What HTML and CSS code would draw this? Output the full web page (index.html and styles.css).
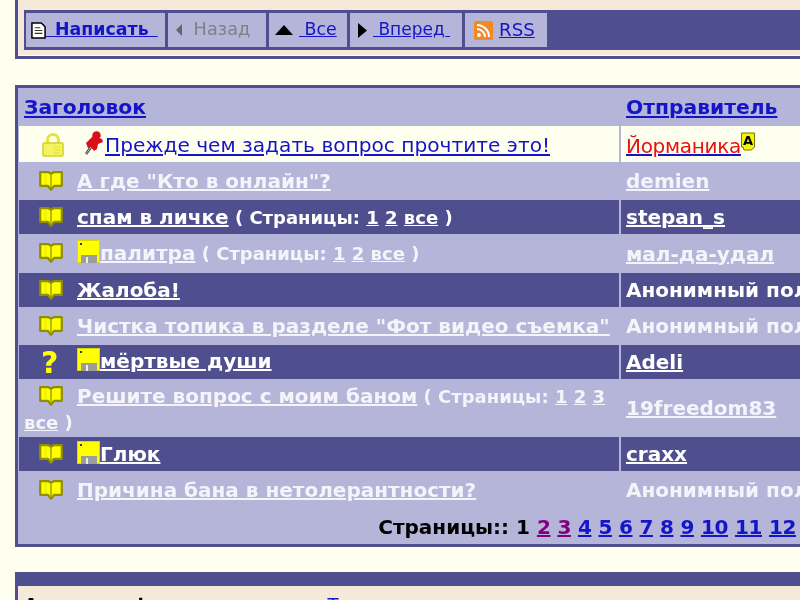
FILE: index.html
```html
<!DOCTYPE html>
<html lang="ru">
<head>
<meta charset="utf-8">
<title>Форум</title>
<link rel="stylesheet" href="styles.css">
</head>
<body>
<svg class="defs" width="0" height="0" aria-hidden="true">
  <defs>
    <symbol id="book" viewBox="0 0 24 21">
      <path d="M1.2 2.2h8.3l2.5 1.6 2.5-1.6h8.3v13.6h-7.6L12 19.8l-3.2-4H1.2z" fill="#ffff00" stroke="#8f8f00" stroke-width="2.2" stroke-linejoin="round"/>
      <path d="M12 4v14" stroke="#a8a800" stroke-width="1.6"/>
      <path d="M6.5 4v10" stroke="#f4f400" stroke-width="3"/>
    </symbol>
    <symbol id="floppy" viewBox="0 0 23 23">
      <path d="M0 0h23v23H0z" fill="#ffff00"/>
      <path d="M.5.5h22v22H.5z" fill="none" stroke="#d8d800"/>
      <path d="M4 15h16v8H4z" fill="#9c9c9c"/>
      <path d="M9 17h2v6H9z" fill="#ececec"/>
      <path d="M3 3h2v2H3z" fill="#333"/>
    </symbol>
  </defs>
</svg>

<div class="panel top-panel">
  <nav class="toolbar">
    <div class="tool tool-new">
      <svg class="ico-doc" viewBox="0 0 16 18" width="15" height="17"><path d="M1 1h10l4 4v12H1z" fill="#fff" stroke="#000" stroke-width="1.6"/><path d="M4 6h6M4 9h8M4 12h8" stroke="#333" stroke-width="1.2"/></svg>
      <a class="lnk lnk-b" href="#">&nbsp;Написать&nbsp;</a>
    </div>
    <div class="tool tool-back">
      <svg class="ico-arr" viewBox="0 0 8 14" width="8" height="14"><path d="M7 1v12L1 7z" fill="#666"/></svg>
      <span class="muted">&nbsp;Назад</span>
    </div>
    <div class="tool tool-all">
      <svg viewBox="0 0 18 10" width="18" height="10"><path d="M9 0l9 10H0z" fill="#000"/></svg>
      <a class="lnk" href="#">&nbsp;Все</a>
    </div>
    <div class="tool tool-next">
      <svg viewBox="0 0 9 15" width="9" height="15"><path d="M0 0l9 7.5L0 15z" fill="#000"/></svg>
      <a class="lnk" href="#">&nbsp;Вперед&nbsp;</a>
    </div>
    <div class="tool tool-rss">
      <svg viewBox="0 0 19 19" width="19" height="19"><rect width="19" height="19" rx="2" fill="#f08a24"/><circle cx="5" cy="14" r="2" fill="#fff"/><path d="M3 8a8 8 0 0 1 8 8M3 4a12 12 0 0 1 12 12" fill="none" stroke="#fff" stroke-width="2"/></svg>
      <a class="lnk" href="#">RSS</a>
    </div>
  </nav>
</div>

<div class="board">
  <table class="topics">
    <colgroup><col class="col-title"><col class="col-author"></colgroup>
    <thead>
      <tr><th><a href="#">Заголовок</a></th><th><a href="#">Отправитель</a></th></tr>
    </thead>
    <tbody>
      <tr class="pale">
        <td><span class="status">
          <svg viewBox="0 0 22 24" width="22" height="24"><path d="M5.500 11V7a5.500 5.500 0 0 1 11 0v4" fill="none" stroke="#e4e43c" stroke-width="3"/><rect x="1" y="10" width="20" height="13" rx="1" fill="#f4f460" stroke="#d4d41c" stroke-width="1.500"/><path d="M12 14h6M12 17h6M12 20h6" stroke="#e0e030"/></svg>
        </span><svg class="pin" viewBox="0 0 20 24" width="20" height="24"><path d="M2 23l5-7" stroke="#222" stroke-width="2.400"/><path d="M2 23l5-7" stroke="#fff" stroke-width=".8"/><circle cx="12.500" cy="4.500" r="4.200" fill="#d8101c"/><path d="M2 12l7-7 9 3 1 3-5 2-1 5-3 2-3-4-3 1z" fill="#d8101c"/></svg><a class="first" href="#">Прежде чем задать вопрос прочтите это!</a></td>
        <td><a class="admin" href="#"><span>Йорманика</span></a><svg class="badge" viewBox="0 0 14 20" width="14" height="20"><path d="M.5 1h13v14l-3 3H3l-1-3H.5z" fill="#f5f500" stroke="#777700"/><text x="7" y="13" class="badge-a">A</text></svg></td>
      </tr>
      <tr class="lite">
        <td><span class="status"><svg class="book"><use href="#book"/></svg></span><a href="#">А где "Кто в онлайн"?</a></td>
        <td><a href="#">demien</a></td>
      </tr>
      <tr class="dark">
        <td><span class="status"><svg class="book"><use href="#book"/></svg></span><a href="#">спам в личке</a><span class="pages"> ( Страницы: <a href="#">1</a> <a href="#">2</a> <a href="#">все</a> )</span></td>
        <td><a href="#">stepan_s</a></td>
      </tr>
      <tr class="lite grown">
        <td><span class="status"><svg class="book"><use href="#book"/></svg></span><svg class="floppy"><use href="#floppy"/></svg><a href="#">палитра</a><span class="pages"> ( Страницы: <a href="#">1</a> <a href="#">2</a> <a href="#">все</a> )</span></td>
        <td><a href="#">мал-да-удал</a></td>
      </tr>
      <tr class="dark">
        <td><span class="status"><svg class="book"><use href="#book"/></svg></span><a href="#">Жалоба!</a></td>
        <td class="anon">Анонимный пользователь</td>
      </tr>
      <tr class="lite">
        <td><span class="status"><svg class="book"><use href="#book"/></svg></span><a href="#">Чистка топика в разделе "Фот видео съемка"</a></td>
        <td class="anon">Анонимный пользователь</td>
      </tr>
      <tr class="dark">
        <td><span class="status status-q">?</span><svg class="floppy"><use href="#floppy"/></svg><a href="#">мёртвые души</a></td>
        <td><a href="#">Adeli</a></td>
      </tr>
      <tr class="lite tall">
        <td><span class="status"><svg class="book"><use href="#book"/></svg></span><a href="#">Решите вопрос с моим баном</a><span class="pages"> ( Страницы: <a href="#">1</a> <a href="#">2</a> <a href="#">3</a> <a href="#">все</a> )</span></td>
        <td><a href="#">19freedom83</a></td>
      </tr>
      <tr class="dark">
        <td><span class="status"><svg class="book"><use href="#book"/></svg></span><svg class="floppy"><use href="#floppy"/></svg><a href="#">Глюк</a></td>
        <td><a href="#">craxx</a></td>
      </tr>
      <tr class="lite">
        <td><span class="status"><svg class="book"><use href="#book"/></svg></span><a href="#">Причина бана в нетолерантности?</a></td>
        <td class="anon">Анонимный пользователь</td>
      </tr>
    </tbody>
  </table>
  <div class="pager">
    Страницы:: 1 <a class="seen" href="#">2</a> <a class="seen" href="#">3</a> <a href="#">4</a> <a href="#">5</a> <a href="#">6</a> <a href="#">7</a> <a href="#">8</a> <a href="#">9</a> <a href="#">10</a> <a href="#">11</a> <a href="#">12</a>
  </div>
</div>

<div class="panel bottom-panel">
  <div class="bar"></div>
  <div class="active"><b>Активные форумы раздела:</b> <a href="#">Техническая поддержка</a></div>
</div>
</body>
</html>
```
FILE: styles.css
```css
html, body { margin: 0; padding: 0; height: 600px; overflow: hidden; }
body {
  width: 800px;
  background: #fffff0;
  font-family: "DejaVu Sans", Verdana, sans-serif;
  font-size: 20px;
  filter: blur(0.4px);
}
.defs { display: block; height: 0; }
.panel, .board { width: 1000px; margin-left: 15px; box-sizing: border-box; }

.top-panel {
  height: 59px;
  background: #f5e9da;
  border: solid #4f4f8f;
  border-width: 0 3px 3px;
  padding: 10px 0 0 6px;
  box-shadow: inset 0 -1px 0 #fff8f0;
}
.toolbar {
  display: flex;
  gap: 3px;
  height: 40px;
  box-sizing: border-box;
  background: #4f4f8f;
  padding: 3px 3px 3px 2px;
  font-size: 17.7px;
}
.tool {
  display: flex;
  align-items: center;
  box-sizing: border-box;
  background: #b5b5da;
  white-space: nowrap;
}
.tool-new { width: 139px; padding-left: 5px; }
.tool-back { width: 98px; padding-left: 7px; }
.tool-all { width: 78px; padding-left: 6px; }
.tool-next { width: 112px; padding-left: 8px; }
.tool-rss { width: 82px; padding-left: 9px; gap: 6px; }
.lnk, .muted { margin-bottom: 2px; }
.lnk { color: #1414c8; text-decoration: underline; }
.lnk-b { font-weight: bold; font-size: 17.4px; word-spacing: 3px; }
.muted { color: #808080; margin-left: 5px; }
.tool-all .lnk { margin-left: 6px; font-size: 17.4px; }
.tool-next .lnk { margin-left: 6px; font-size: 17px; }
.tool-rss .lnk { font-size: 18.2px; }

.board {
  margin-top: 26px;
  background: #b5b5da;
  border: 3px solid #4f4f8f;
  padding: 2px 0 0 1px;
  height: 462px;
}
.topics {
  width: 980px;
  table-layout: fixed;
  border-collapse: separate;
  border-spacing: 0;
  margin-top: 0;
}
.topics tbody td { border-bottom: 2px solid #b5b5da; box-sizing: border-box; }
.col-title { width: 600px; }
.topics th, .topics td {
  padding: 0 0 0 5px;
  text-align: left;
  vertical-align: middle;
}
.topics th { height: 36px; font-weight: bold; font-size: 20.3px; padding-bottom: 2px; box-sizing: border-box; }
.topics th a { color: #1414c8; }
.topics td + td, .topics th + th { border-left: 2px solid #b5b5da; }
.topics td { height: 36px; font-weight: bold; line-height: 26px; white-space: normal; }
.topics td:last-child { white-space: nowrap; }
.lite td { background: #b5b5da; color: #f4f4fa; }
.dark td { background: #4f4f8f; color: #fff; }
.lite a, .dark a { color: inherit; }
.topics .pale td { background: #fffff0; font-weight: normal; height: 38px; padding-top: 2px; }
.pale a { color: #1414c8; }
.pale .first { font-size: 20.15px; margin-left: 1px; }
.admin { letter-spacing: -0.3px; }
.admin span { color: #e81010; }
.badge { vertical-align: 1px; }
.badge-a { font: bold 13px "DejaVu Sans", sans-serif; text-anchor: middle; fill: #000; }
.status {
  display: inline-block;
  width: 53px;
  padding-left: 15px;
  box-sizing: border-box;
  vertical-align: middle;
  line-height: 0;
  margin-bottom: 3px;
}
.pale .status { padding-left: 18px; width: 60px; margin-bottom: 3px; }
.pale .status svg { vertical-align: 7px; }
.status-q { color: #ffff00; font-size: 30px; line-height: 26px; padding-left: 17px; margin-bottom: 0; }
.book { width: 24px; height: 21px; vertical-align: 8px; }
.floppy { width: 23px; height: 23px; vertical-align: -3px; }
.pin { vertical-align: -3px; }
.pages { font-size: 18px; }
.grown td { height: 37px; }
.tall td { height: 54px; }
.tall td:first-child { line-height: 24px; padding-top: 3px; }

.pager {
  text-align: right;
  font-weight: bold;
  white-space: nowrap;
  width: 777px;
  padding-top: 6px;
  color: #000;
}
.pager a { color: #1414c8; letter-spacing: -0.4px; }
.pager .seen { color: #800080; }

.bottom-panel {
  margin-top: 25px;
  background: #f5e9da;
  border: solid #4f4f8f;
  border-width: 0 3px;
  height: 60px;
}
.bar { height: 14px; background: #4f4f8f; }
.active { padding: 8px 6px; font-size: 18px; }
.active a { color: #1414c8; margin-left: 3px; }
```
